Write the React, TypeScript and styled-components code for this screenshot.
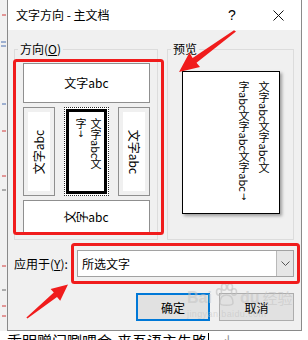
import React from "react";
import styled, { createGlobalStyle } from "styled-components";

const Global = createGlobalStyle`
  html, body { margin: 0; padding: 0; background: #fff; }
  body { font-family: "Noto Sans CJK SC", "Liberation Sans", sans-serif; }
`;

const Page = styled.div`
  position: relative;
  width: 308px;
  height: 340px;
  overflow: hidden;
  display: grid;
  grid-template-columns: 7px 295px 1fr;
  grid-template-rows: 331px 1fr;
  background: #fff;
  color: #000;
  font-family: "Noto Sans CJK SC", "Liberation Sans", sans-serif;
`;

const DocMargin = styled.svg`
  grid-column: 1;
  grid-row: 1;
  display: block;
  background: #f1f1f1;
`;

const Dialog = styled.div`
  grid-column: 2;
  grid-row: 1;
  display: flex;
  flex-direction: column;
  box-sizing: border-box;
  border: 1px solid #8a8a8a;
  border-top: none;
  background: #f0f0f0;
`;

const TitleBar = styled.div`
  height: 30px;
  flex: none;
  display: flex;
  align-items: center;
  background: #fff;
  padding-left: 8px;
`;

const Title = styled.div`
  flex: 1;
  font-size: 12px;
  line-height: 14px;
`;

const CaptionButton = styled.div`
  width: 46px;
  height: 30px;
  display: flex;
  align-items: center;
  justify-content: center;
  font-size: 14px;
  font-family: "Liberation Sans", sans-serif;
`;

const Body = styled.div`
  flex: 1;
  display: flex;
  flex-direction: column;
  padding: 19px 7px 0 6px;
`;

const GroupRow = styled.div`
  display: flex;
  gap: 9px;
  height: 191px;
`;

const GroupBox = styled.div<{ $w?: number; $pad: string }>`
  position: relative;
  box-sizing: border-box;
  ${(p) => (p.$w ? `width: ${p.$w}px;` : "flex: 1;")}
  border: 1px solid #dcdcdc;
  padding: ${(p) => p.$pad};
`;

const GroupLabel = styled.span`
  position: absolute;
  top: -8px;
  left: 3px;
  padding: 0 2px;
  background: #f0f0f0;
  font-size: 12px;
  line-height: 14px;
`;

const OptionGrid = styled.div`
  display: grid;
  grid-template-columns: 32px 45px 32px;
  grid-template-rows: 40px 89px 34px;
  column-gap: 9px;
  row-gap: 4px;
`;

const Option = styled.div<{ $selected?: boolean; $hatched?: boolean; $span?: boolean }>`
  grid-column: ${(p) => (p.$span ? "1 / -1" : "auto")};
  box-sizing: border-box;
  background: #fff;
  border: 1px ${(p) => (p.$selected ? "dotted #2a2a2a" : "solid #8f8f8f")};
  box-shadow: ${(p) =>
    p.$selected
      ? "inset 0 0 0 1px #fff, inset 0 0 0 4px #000"
      : p.$hatched
      ? "inset 0 0 0 4px #f0f0f0"
      : "none"};
  display: flex;
  align-items: center;
  justify-content: center;
  overflow: hidden;
  font-size: 12px;
  line-height: 14px;
`;

const Rotated = styled.span<{ $deg: number }>`
  display: inline-block;
  white-space: nowrap;
  transform: rotate(${(p) => p.$deg}deg);
`;

const SideGlyph = styled.span`
  display: inline-block;
  transform: rotate(-90deg);
`;

const MiniVertical = styled.div`
  align-self: flex-start;
  margin: 10px 5px 0 auto;
  writing-mode: vertical-rl;
  font-size: 11px;
  line-height: 15px;
  white-space: nowrap;
`;

const Upright = styled.span`
  text-orientation: upright;
  font-family: "DejaVu Sans", sans-serif;
  font-size: 9px;
`;

const PreviewPaper = styled.div`
  box-sizing: border-box;
  width: 98px;
  height: 143px;
  background: #fff;
  border: 1px solid #000;
  box-shadow: 2px 2px 3px rgba(0, 0, 0, 0.35);
  writing-mode: vertical-rl;
  padding: 9px 5px 0 0;
  font-size: 11px;
  line-height: 20px;
  white-space: nowrap;
`;

const ApplyRow = styled.div`
  display: flex;
  align-items: center;
  margin-top: 10px;
`;

const ApplyLabel = styled.div`
  width: 63px;
  flex: none;
  font-size: 12px;
  line-height: 14px;
`;

const Combo = styled.div`
  flex: 1;
  height: 27px;
  box-sizing: border-box;
  display: flex;
  background: #fff;
  border: 1px solid #a2a2a2;
`;

const ComboText = styled.div`
  flex: 1;
  display: flex;
  align-items: center;
  padding-left: 4px;
  font-size: 12px;
`;

const ComboButton = styled.div`
  width: 16px;
  flex: none;
  display: flex;
  align-items: center;
  justify-content: center;
  background: #e6e6e6;
  border-left: 1px solid #b9b9b9;
`;

const ButtonRow = styled.div`
  display: flex;
  justify-content: flex-end;
  gap: 9px;
  margin-top: 16px;
`;

const Button = styled.div<{ $default?: boolean; $w: number }>`
  width: ${(p) => p.$w}px;
  height: 28px;
  box-sizing: border-box;
  display: flex;
  align-items: center;
  justify-content: center;
  background: #e1e1e1;
  border: ${(p) => (p.$default ? "2px solid #0078d7" : "1px solid #adadad")};
  font-size: 12px;
`;

const DocLine = styled.div`
  grid-column: 2 / 4;
  grid-row: 2;
  margin-top: 2px;
  font-size: 15px;
  line-height: 15px;
  white-space: nowrap;
  display: flex;
  align-items: flex-start;
`;

const DocGap = styled.span`
  width: 5px;
`;

const Caret = styled.span`
  width: 1px;
  height: 15px;
  background: #000;
  margin: 0 1px;
`;

const ParaMark = styled.span`
  margin-left: 11px;
  color: #8a8a8a;
  font-family: "DejaVu Sans", sans-serif;
  font-size: 12px;
`;

const Overlay = styled.svg`
  position: absolute;
  left: 0;
  top: 0;
  pointer-events: none;
`;

const Watermark = styled.div`
  position: absolute;
  left: 187px;
  top: 283px;
  display: flex;
  flex-direction: column;
  align-items: flex-start;
  color: rgba(195, 195, 195, 0.55);
  pointer-events: none;
`;

const WatermarkTop = styled.div`
  display: flex;
  align-items: flex-end;
  gap: 1px;
  font-family: "Liberation Sans", sans-serif;
  font-weight: bold;
  font-size: 16px;
  line-height: 18px;
`;

const WatermarkCn = styled.span`
  font-family: "Noto Sans CJK SC", sans-serif;
  font-weight: normal;
  font-size: 15px;
  margin-left: 2px;
`;

const WatermarkUrl = styled.div`
  font-family: "Liberation Sans", sans-serif;
  font-size: 9px;
  line-height: 10px;
  margin-top: 2px;
  letter-spacing: 0.4px;
`;

export default function App() {
  return (
    <>
      <Global />
      <Page>
        <DocMargin width="7" height="331" viewBox="0 0 7 331">
          <g strokeWidth="1">
            <line x1="2" y1="15" x2="6" y2="15" stroke="#d23a3a" />
            <line x1="1" y1="42" x2="6" y2="42" stroke="#4a6fb0" />
            <line x1="1" y1="46" x2="6" y2="46" stroke="#4a6fb0" />
            <line x1="2" y1="104" x2="6" y2="104" stroke="#4a6fb0" />
            <line x1="2" y1="131" x2="6" y2="131" stroke="#d23a3a" />
            <line x1="2" y1="176" x2="6" y2="176" stroke="#d23a3a" />
            <line x1="2" y1="190" x2="6" y2="190" stroke="#666" />
            <line x1="2" y1="266" x2="6" y2="266" stroke="#d23a3a" />
            <line x1="2" y1="290" x2="6" y2="290" stroke="#666" />
            <line x1="2" y1="306" x2="6" y2="306" stroke="#d23a3a" />
            <line x1="2" y1="316" x2="6" y2="316" stroke="#d23a3a" />
          </g>
        </DocMargin>

        <Dialog>
          <TitleBar>
            <Title>文字方向 - 主文档</Title>
            <CaptionButton>?</CaptionButton>
            <CaptionButton>
              <svg width="11" height="11" viewBox="0 0 11 11">
                <path d="M0.5 0.5 L10.5 10.5 M10.5 0.5 L0.5 10.5" stroke="#111" strokeWidth="1" fill="none" />
              </svg>
            </CaptionButton>
          </TitleBar>

          <Body>
            <GroupRow>
              <GroupBox $w={144} $pad="13px 0 0 8px">
                <GroupLabel>
                  方向(<u>O</u>)
                </GroupLabel>
                <OptionGrid>
                  <Option $span>文字abc</Option>
                  <Option $hatched>
                    <Rotated $deg={-90}>文字abc</Rotated>
                  </Option>
                  <Option $selected>
                    <MiniVertical>
                      文字abc文
                      <br />
                      字<Upright>↓</Upright>
                    </MiniVertical>
                  </Option>
                  <Option $hatched>
                    <Rotated $deg={90}>文字abc</Rotated>
                  </Option>
                  <Option $span>
                    <SideGlyph>文</SideGlyph>
                    <SideGlyph>字</SideGlyph>abc
                  </Option>
                </OptionGrid>
              </GroupBox>

              <GroupBox $pad="21px 0 0 14px">
                <GroupLabel>预览</GroupLabel>
                <PreviewPaper>
                  文字abc文字abc文
                  <br />
                  字abc文字abc文字abc<Upright>↓</Upright>
                </PreviewPaper>
              </GroupBox>
            </GroupRow>

            <ApplyRow>
              <ApplyLabel>
                应用于(<u>Y</u>):
              </ApplyLabel>
              <Combo>
                <ComboText>所选文字</ComboText>
                <ComboButton>
                  <svg width="9" height="5" viewBox="0 0 9 5">
                    <path d="M0.5 0.5 L4.5 4.5 L8.5 0.5" stroke="#555" strokeWidth="1" fill="none" />
                  </svg>
                </ComboButton>
              </Combo>
            </ApplyRow>

            <ButtonRow>
              <Button $default $w={74}>
                确定
              </Button>
              <Button $w={75}>取消</Button>
            </ButtonRow>
          </Body>
        </Dialog>

        <DocLine>
          乖明赠门唰喂会
          <DocGap />
          来吾语主先路
          <Caret />
          <ParaMark>↲</ParaMark>
        </DocLine>

        <Watermark>
          <WatermarkTop>
            Bai
            <svg width="26" height="24" viewBox="0 0 26 24">
              <g fill="none" stroke="rgba(190,190,190,0.6)" strokeWidth="1.5">
                <ellipse cx="6" cy="9" rx="2.5" ry="3.2" />
                <ellipse cx="11" cy="4" rx="2.5" ry="3.2" />
                <ellipse cx="17" cy="4" rx="2.5" ry="3.2" />
                <ellipse cx="21" cy="9" rx="2.5" ry="3.2" />
                <path d="M7 20 C7 14 10 12 13.5 12 C17 12 20 14 20 20 C20 23 7 23 7 20 Z" />
              </g>
            </svg>
            du
            <WatermarkCn>经验</WatermarkCn>
          </WatermarkTop>
          <WatermarkUrl>jingyan.baidu.com</WatermarkUrl>
        </Watermark>

        <Overlay width="308" height="340" viewBox="0 0 308 340">
          <g fill="none" stroke="#f01c1c" strokeWidth="3">
            <rect x="14.5" y="60.5" width="148" height="173" rx="2" />
            <rect x="72.5" y="244.5" width="226" height="38" rx="2" />
          </g>
          <g fill="#f01c1c">
            <polygon points="179,72 200,67 196.5,62.8 236,31.6 234,30.2 192.6,58 189.5,52.5" />
            <polygon points="68,284.5 60.2,300.8 57,297 27.4,318.6 26.4,317.4 53.8,292.6 50.6,289" />
          </g>
        </Overlay>
      </Page>
    </>
  );
}
